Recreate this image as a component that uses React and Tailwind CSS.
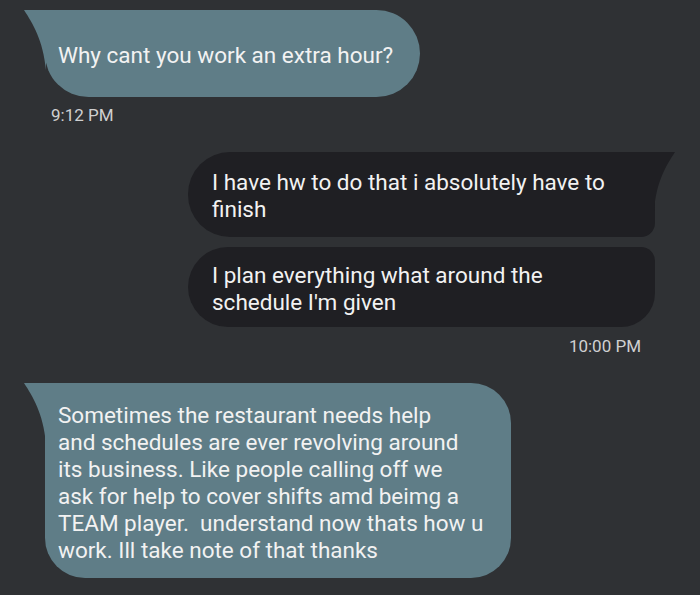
import React from "react";

const LIGHT = "#5f7d87";
const DARK = "#1f1f23";

const TailLeft = ({ color }) => (
  <svg
    className="absolute left-[-21px] top-0"
    width="22"
    height="60"
    viewBox="0 0 22 60"
  >
    <path d="M0 0 C 9 14, 19 30, 22 60 L22 0 Z" fill={color} />
  </svg>
);

const TailRight = ({ color }) => (
  <svg
    className="absolute right-[-20px] top-0"
    width="21"
    height="60"
    viewBox="0 0 21 60"
  >
    <path d="M21 0 C 12 14, 2 30, 0 60 L0 0 Z" fill={color} />
  </svg>
);

const App = () => {
  return (
    <div
      className="w-[700px] h-[595px] overflow-hidden bg-[#2f3134] flex flex-col text-[#f2f2f2]"
      style={{ fontFamily: "Roboto, 'Noto Sans', sans-serif" }}
    >
      <div className="relative ml-[45px] mt-[10px] w-[375px] h-[87px] pt-[32px] pl-[13px] bg-[#5f7d87] rounded-[44px] rounded-tl-none text-[22.5px] leading-[27px]">
        <TailLeft color={LIGHT} />
        Why cant you work an extra hour?
      </div>
      <div className="ml-[51px] mt-[8px] text-[17px] leading-[20px] text-[#cfd0d1]">
        9:12 PM
      </div>

      <div className="relative self-end mr-[45px] mt-[27px] w-[467px] h-[85px] pt-[17px] pl-[24px] bg-[#1f1f23] rounded-l-[42px] rounded-br-[14px] text-[22.5px] leading-[27px]">
        <TailRight color={DARK} />
        I have hw to do that i absolutely have to
        <br />
        finish
      </div>
      <div className="self-end mr-[45px] mt-[10px] w-[467px] h-[80px] pt-[15px] pl-[24px] bg-[#1f1f23] rounded-l-[40px] rounded-tr-[14px] rounded-br-[34px] text-[22.5px] leading-[27px]">
        I plan everything what around the
        <br />
        schedule I'm given
      </div>
      <div className="self-end mr-[59px] mt-[9px] text-[17px] leading-[20px] text-[#cfd0d1]">
        10:00 PM
      </div>

      <div className="relative ml-[45px] mt-[27px] w-[466px] h-[195px] pt-[19px] pl-[13px] bg-[#5f7d87] rounded-[40px] rounded-tl-none text-[22.5px] leading-[27px]">
        <TailLeft color={LIGHT} />
        Sometimes the restaurant needs help
        <br />
        and schedules are ever revolving around
        <br />
        its business. Like people calling off we
        <br />
        ask for help to cover shifts amd beimg a
        <br />
        TEAM player.&nbsp; understand now thats how u
        <br />
        work. Ill take note of that thanks
      </div>
    </div>
  );
};

export default App;
